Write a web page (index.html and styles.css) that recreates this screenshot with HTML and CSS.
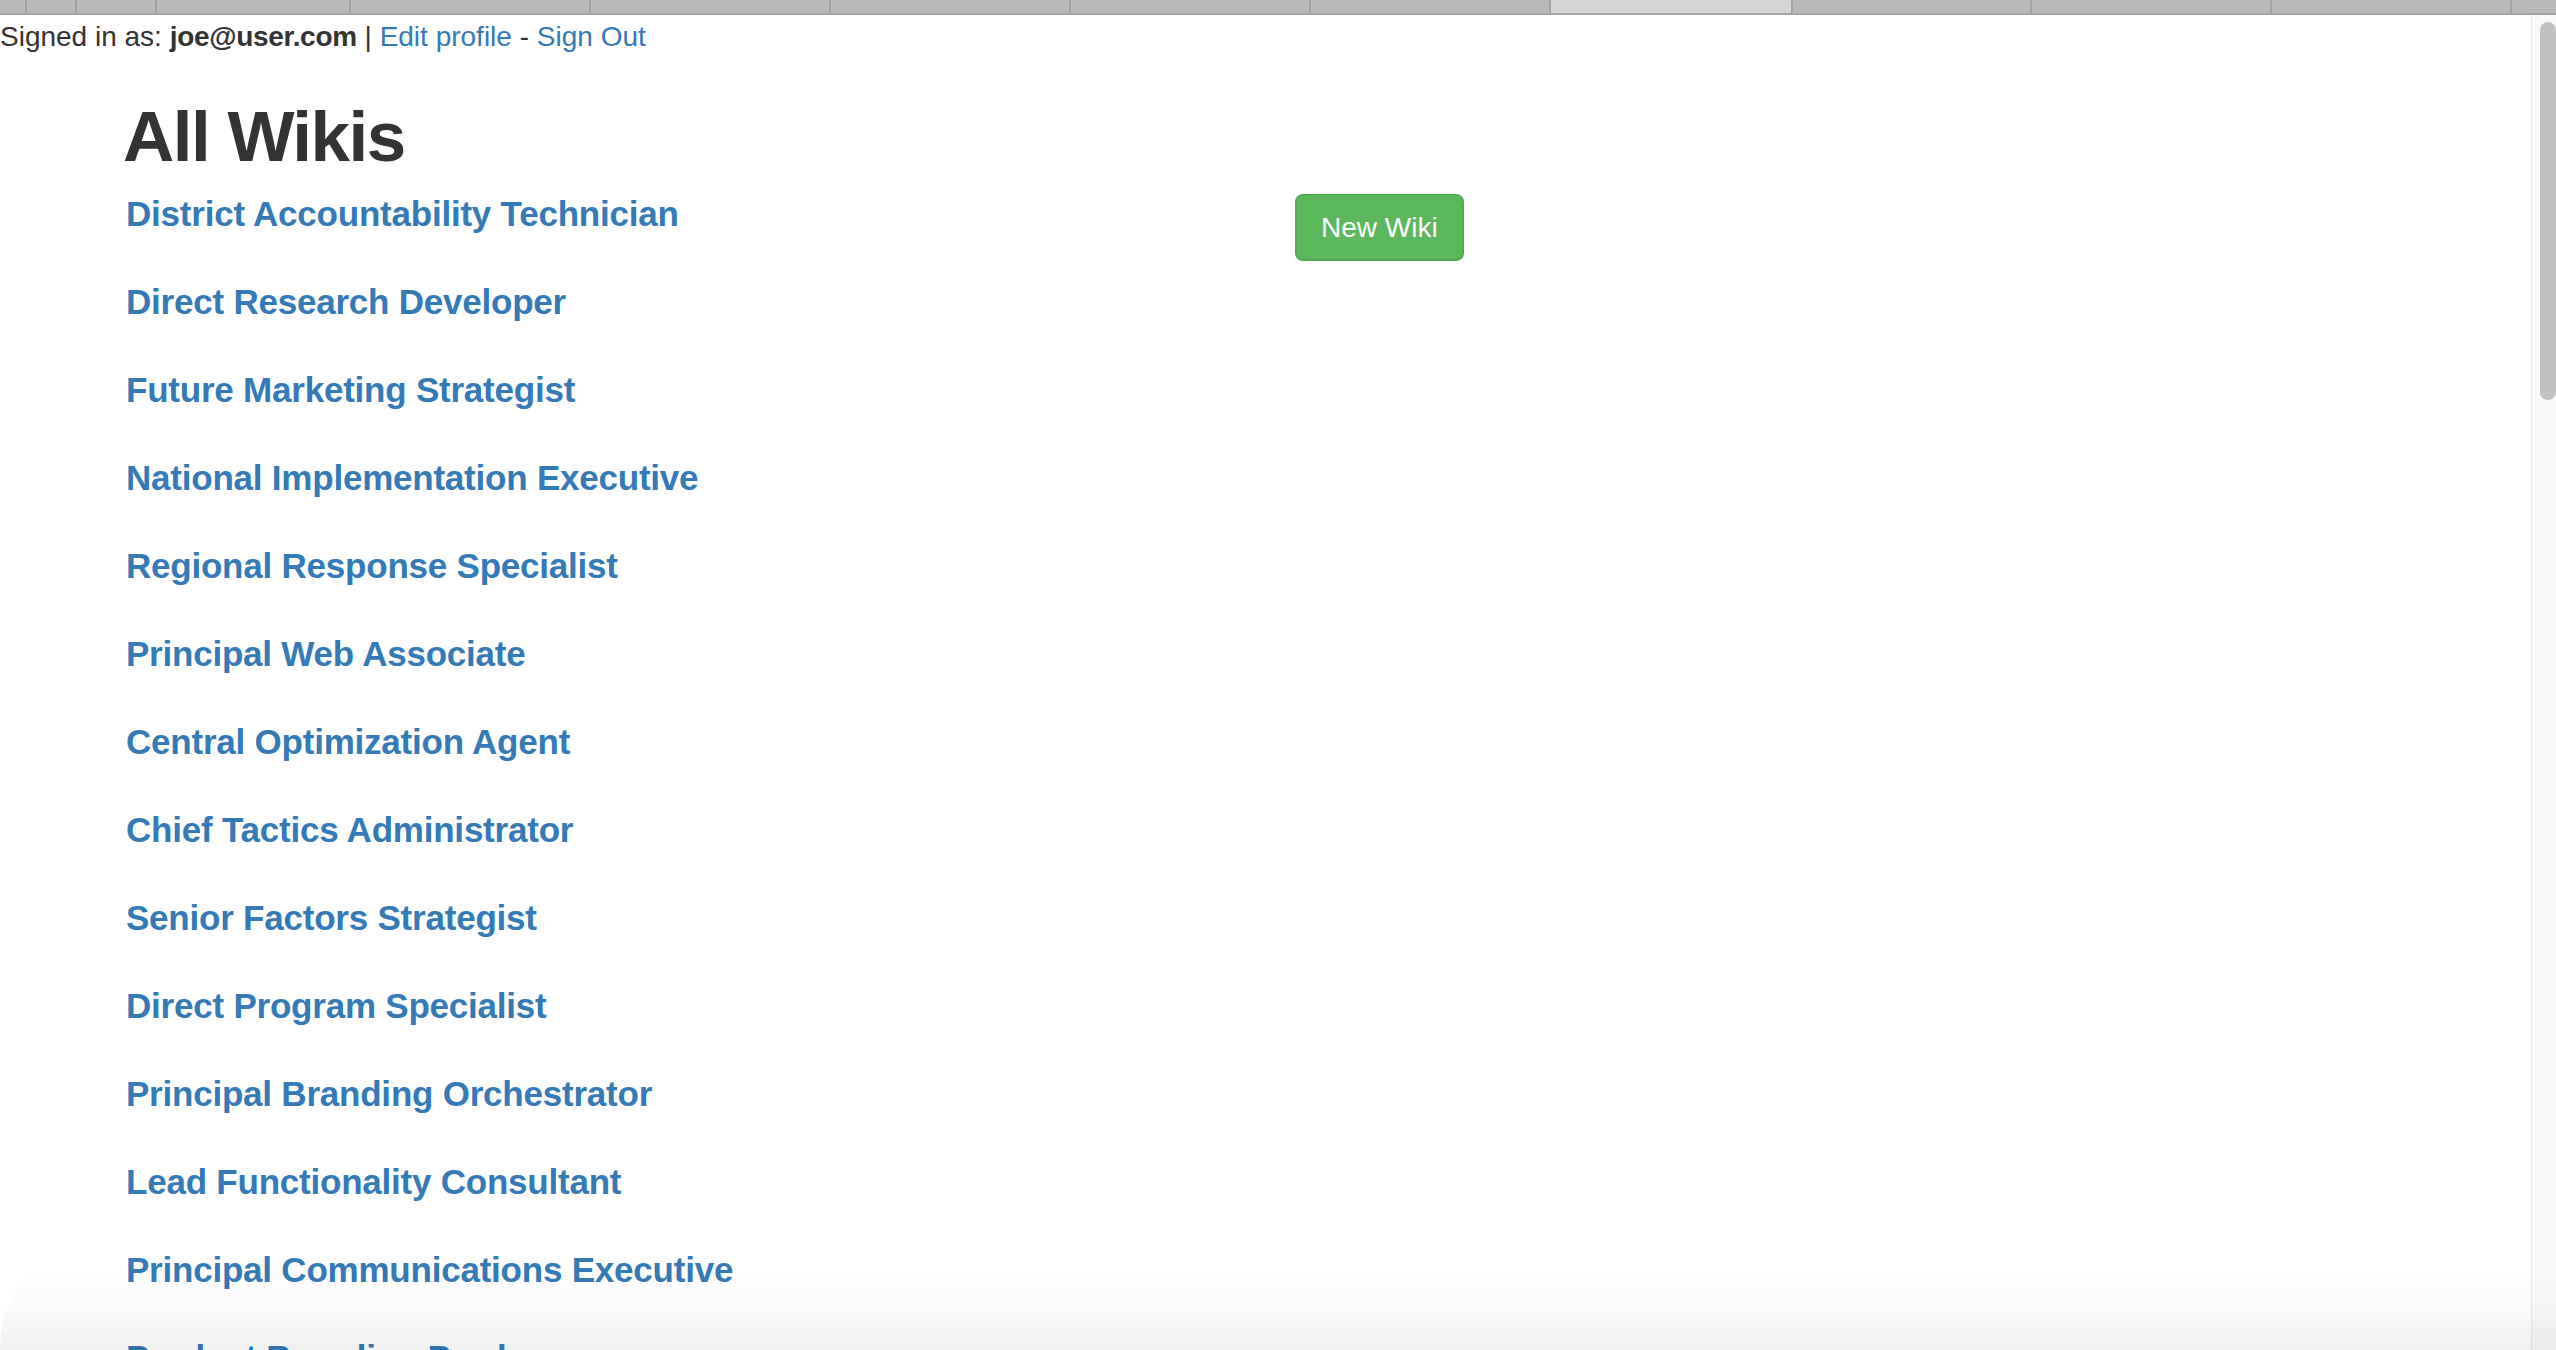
FILE: index.html
```html
<!DOCTYPE html>
<html lang="en">
<head>
<meta charset="utf-8">
<title>All Wikis</title>
<link rel="stylesheet" href="styles.css">
</head>
<body>
<div class="tabbar">
  <div class="tab t26"></div>
  <div class="tab t51"></div>
  <div class="tab t80"></div>
  <div class="tab t194"></div>
  <div class="tab"></div>
  <div class="tab"></div>
  <div class="tab"></div>
  <div class="tab"></div>
  <div class="tab"></div>
  <div class="tab active"></div>
  <div class="tab t239"></div>
  <div class="tab"></div>
  <div class="tab"></div>
  <div class="tab rest"></div>
</div>
<div class="window">
  <div class="page">
    <div class="userbar">Signed in as: <strong>joe@user.com</strong> | <a href="#">Edit profile</a> - <a href="#">Sign Out</a></div>
    <div class="container">
      <h1>All Wikis</h1>
      <div class="row">
        <ul class="wiki-list">
          <li><a href="#">District Accountability Technician</a></li>
          <li><a href="#">Direct Research Developer</a></li>
          <li><a href="#">Future Marketing Strategist</a></li>
          <li><a href="#">National Implementation Executive</a></li>
          <li><a href="#">Regional Response Specialist</a></li>
          <li><a href="#">Principal Web Associate</a></li>
          <li><a href="#">Central Optimization Agent</a></li>
          <li><a href="#">Chief Tactics Administrator</a></li>
          <li><a href="#">Senior Factors Strategist</a></li>
          <li><a href="#">Direct Program Specialist</a></li>
          <li><a href="#">Principal Branding Orchestrator</a></li>
          <li><a href="#">Lead Functionality Consultant</a></li>
          <li><a href="#">Principal Communications Executive</a></li>
          <li><a href="#">Product Branding Producer</a></li>
        </ul>
        <div class="actions">
          <a href="#" class="btn-success">New Wiki</a>
        </div>
      </div>
    </div>
  </div>
  <div class="scrollbar"><div class="thumb"></div></div>
  <div class="bottom-shade"></div>
</div>
</body>
</html>
```
FILE: styles.css
```css
html, body {
  margin: 0;
  padding: 0;
  height: 100%;
  overflow: hidden;
  background: #ffffff;
}

body {
  font-family: "Liberation Sans", Arial, Helvetica, sans-serif;
  font-size: 28px;
  line-height: 40px;
  color: #333333;
}

a {
  color: #337ab7;
  text-decoration: none;
}

.tabbar {
  display: flex;
  height: 13px;
  background: #bab8bb;
  border-bottom: 2px solid #a6a4a7;
}

.tab {
  box-sizing: border-box;
  width: 240px;
  flex: none;
  height: 13px;
  border-right: 2px solid #a3a1a4;
}

.tab.t26 { width: 27px; }
.tab.t51 { width: 50px; }
.tab.t80 { width: 80px; }
.tab.t194 { width: 194px; }
.tab.t239 { width: 239px; }
.tab.active { width: 242px; background: #d6d4d7; }
.tab.rest { flex: 1; border-right: none; }

.window {
  position: relative;
  display: flex;
  height: 1335px;
  overflow: hidden;
}

.page {
  flex: 1;
  min-width: 0;
}

.userbar {
  height: 40px;
  padding-top: 2px;
  white-space: nowrap;
}

.userbar strong {
  font-weight: bold;
  letter-spacing: -0.3px;
}

.container {
  padding-left: 123px;
}

h1 {
  margin: 40px 0 17px;
  font-size: 71px;
  line-height: 80px;
  font-weight: bold;
  letter-spacing: -1.5px;
  color: #333333;
}

.row {
  display: grid;
  grid-template-columns: 1172px 1fr;
  align-items: start;
}

.wiki-list {
  list-style: none;
  margin: 0;
  padding: 0 0 0 3px;
}

.wiki-list li {
  height: 40px;
  margin-bottom: 48px;
  font-size: 35px;
  line-height: 40px;
  font-weight: bold;
  letter-spacing: -0.22px;
  white-space: nowrap;
}

.actions {
  display: flex;
}

.btn-success {
  display: inline-block;
  padding: 12px 24px 11px;
  font-size: 28px;
  line-height: 40px;
  color: #ffffff;
  background: #5cb85c;
  border: 2px solid #4cae4c;
  border-radius: 8px;
}

.scrollbar {
  flex: none;
  width: 25px;
  background: #f9f9f9;
  border-left: 1px solid #e8e8e8;
  padding: 7px 2px 0 8px;
  box-sizing: border-box;
}

.thumb {
  width: 16px;
  height: 378px;
  border-radius: 8px;
  background: #c1c1c1;
}

.bottom-shade {
  position: absolute;
  left: 0;
  right: 0;
  bottom: 0;
  height: 90px;
  pointer-events: none;
  background: linear-gradient(to bottom, rgba(0,0,0,0) 0%, rgba(0,0,0,0.02) 50%, rgba(0,0,0,0.06) 100%);
  border-top-left-radius: 60px 90px;
}
```
